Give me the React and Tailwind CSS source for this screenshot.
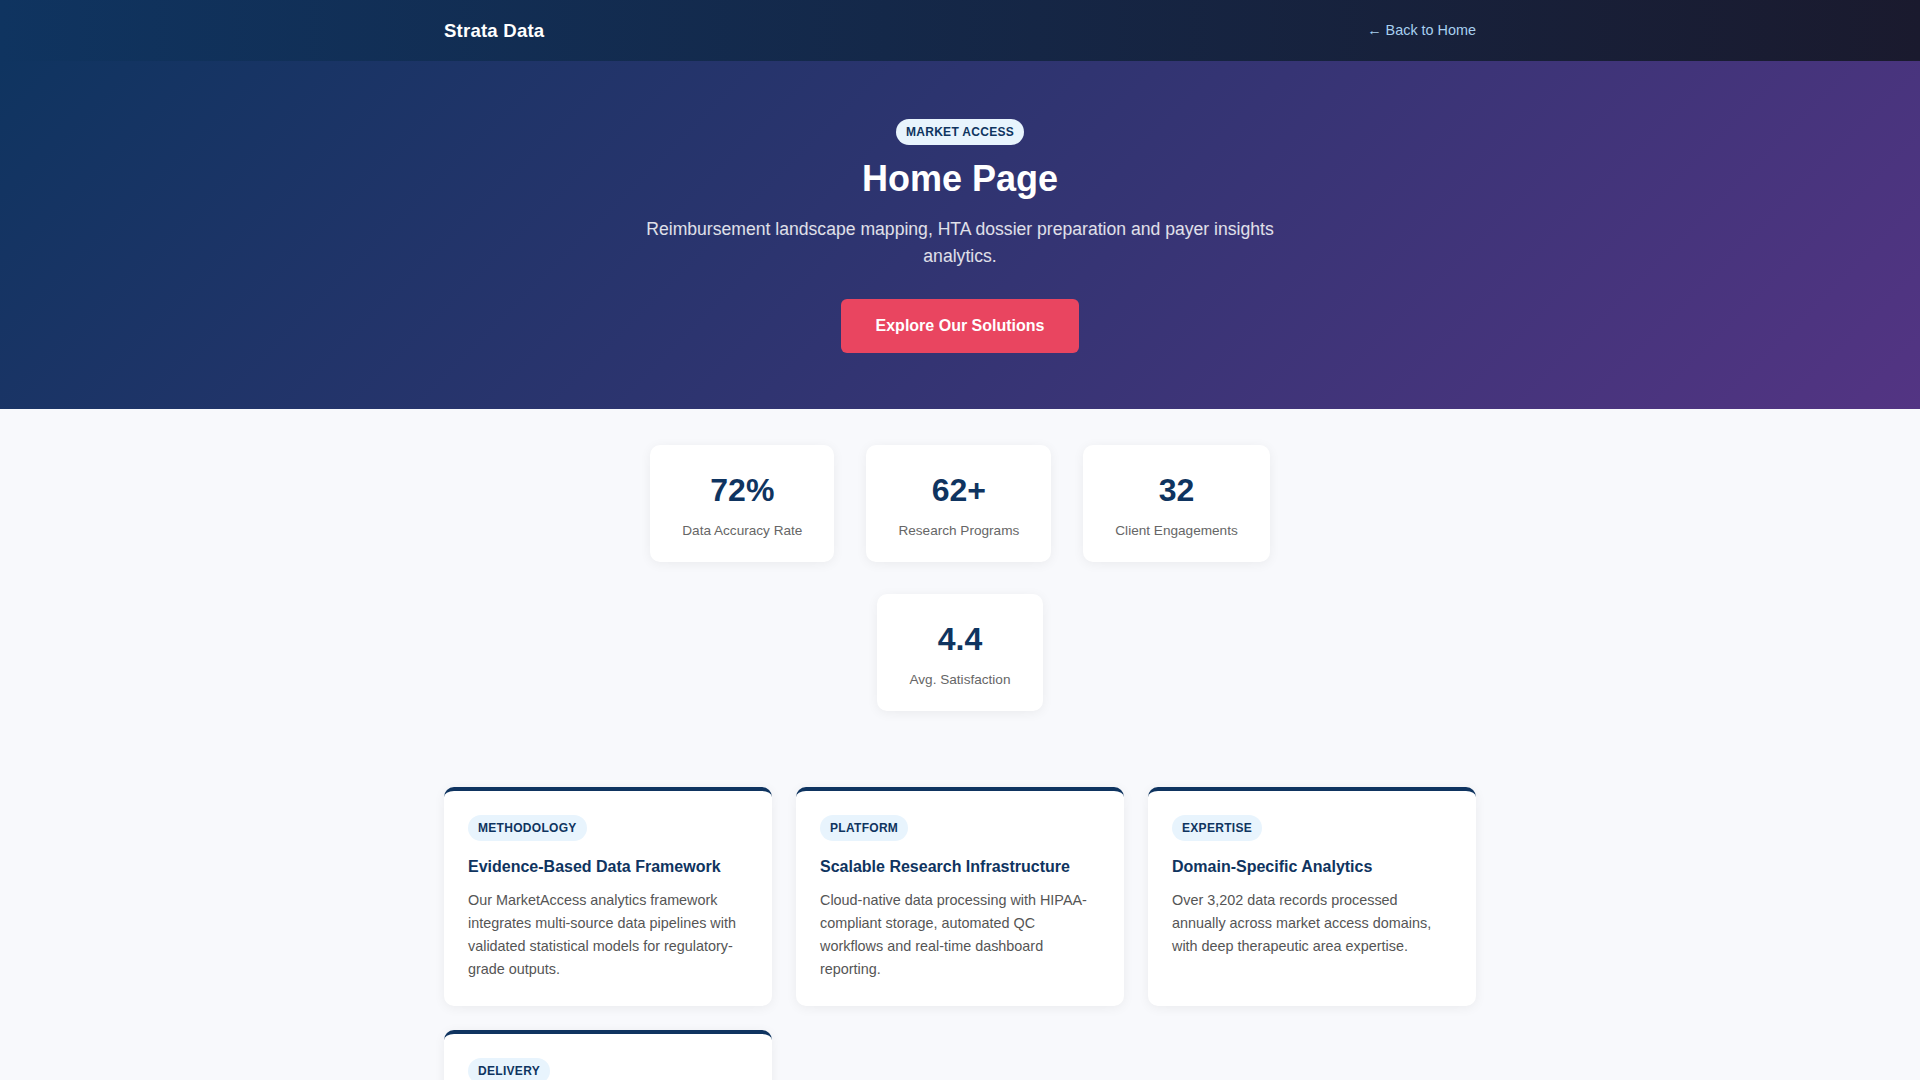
import React from 'react';

const stats = [
  { value: '72%', label: 'Data Accuracy Rate' },
  { value: '62+', label: 'Research Programs' },
  { value: '32', label: 'Client Engagements' },
  { value: '4.4', label: 'Avg. Satisfaction' },
];

const features = [
  {
    tag: 'Methodology',
    title: 'Evidence-Based Data Framework',
    text: 'Our MarketAccess analytics framework integrates multi-source data pipelines with validated statistical models for regulatory-grade outputs.',
  },
  {
    tag: 'Platform',
    title: 'Scalable Research Infrastructure',
    text: 'Cloud-native data processing with HIPAA-compliant storage, automated QC workflows and real-time dashboard reporting.',
  },
  {
    tag: 'Expertise',
    title: 'Domain-Specific Analytics',
    text: 'Over 3,202 data records processed annually across market access domains, with deep therapeutic area expertise.',
  },
  {
    tag: 'Delivery',
    title: 'End-to-End Project Delivery',
    text: 'Dedicated project teams manage every stage from scoping to final reporting, with transparent milestones and quality checkpoints.',
  },
];

const App = () => {
  return (
    <div className="min-h-screen bg-[#f8f9fc] font-['Liberation_Sans',Arial,sans-serif]">
      {/* nav */}
      <nav className="h-[61px] bg-[linear-gradient(90deg,#0f3460,#1a1a2e)]">
        <div className="max-w-[1100px] mx-auto px-[34px] h-full flex items-center justify-between">
          <span className="text-white font-bold text-[18.6px] tracking-[0.2px]">Strata Data</span>
          <a href="#" className="text-[#a8d0f0] text-[14.4px]">← Back to Home</a>
        </div>
      </nav>

      {/* hero */}
      <section className="bg-[linear-gradient(135deg,#0f3460_0%,#533483_100%)] pt-[58px] pb-14 text-center">
        <span className="inline-block bg-[#e8f4fd] text-[#0f3460] text-xs font-bold uppercase tracking-[0.3px] leading-[18px] px-2.5 py-1 rounded-full">
          Market Access
        </span>
        <h1 className="mt-3 mb-4 text-white font-bold text-[36px] leading-[1.2]">Home Page</h1>
        <p className="max-w-[680px] mx-auto text-white/85 text-[17.6px] leading-[27px] mb-[29px]">
          Reimbursement landscape mapping, HTA dossier preparation and payer insights analytics.
        </p>
        <button className="bg-[#e94560] text-white font-bold text-base leading-[18.4px] px-[35px] py-[17.5px] rounded-md">
          Explore Our Solutions
        </button>
      </section>

      {/* stats */}
      <section className="py-9">
        <div className="max-w-[720px] mx-auto flex flex-wrap justify-center gap-8">
          {stats.map((s) => (
            <div
              key={s.label}
              className="bg-white rounded-[10px] shadow-[0_2px_12px_rgba(0,0,0,0.06)] px-8 pt-[26px] pb-[22px] text-center"
            >
              <div className="text-[#0f3460] font-bold text-[32px] leading-[38px] mb-[12px]">{s.value}</div>
              <div className="text-[#666] text-[13.6px] leading-[19px]">{s.label}</div>
            </div>
          ))}
        </div>
      </section>

      {/* features */}
      <section className="pt-10 pb-16">
        <div className="max-w-[1100px] mx-auto px-[34px] grid grid-cols-3 gap-6">
          {features.map((f) => (
            <div
              key={f.tag}
              className="bg-white rounded-[10px] border-t-4 border-[#0f3460] shadow-[0_2px_12px_rgba(0,0,0,0.06)] px-6 pt-6 pb-[25px] flex flex-col items-start"
            >
              <span className="bg-[#e8f4fd] text-[#0f3460] text-xs font-bold uppercase tracking-[0.3px] leading-[18px] px-2.5 py-1 rounded-full mb-[15px]">
                {f.tag}
              </span>
              <h3 className="text-[#0f3460] font-bold text-base leading-[21px] mb-3">{f.title}</h3>
              <p className="text-[#555] text-[14.4px] leading-[23px]">{f.text}</p>
            </div>
          ))}
        </div>
      </section>
    </div>
  );
};

export default App;
